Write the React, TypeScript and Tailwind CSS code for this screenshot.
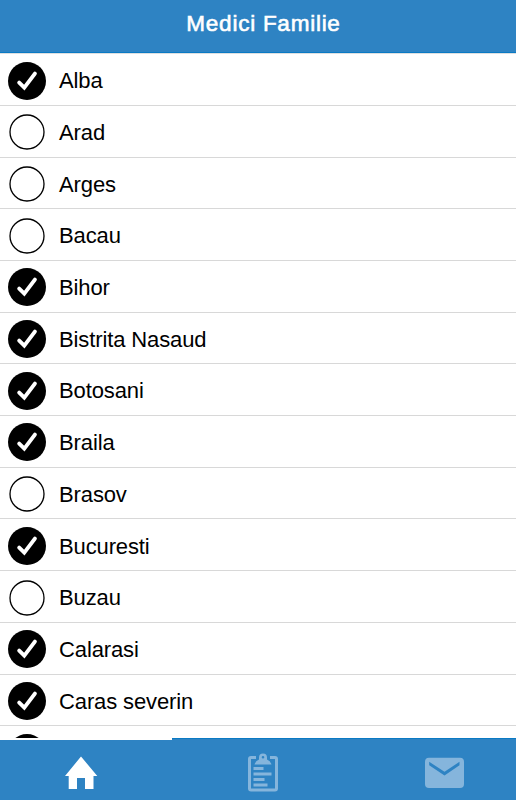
import React from 'react';

interface County {
  name: string;
  selected: boolean;
}

const COUNTIES: County[] = [
  { name: 'Alba', selected: true },
  { name: 'Arad', selected: false },
  { name: 'Arges', selected: false },
  { name: 'Bacau', selected: false },
  { name: 'Bihor', selected: true },
  { name: 'Bistrita Nasaud', selected: true },
  { name: 'Botosani', selected: true },
  { name: 'Braila', selected: true },
  { name: 'Brasov', selected: false },
  { name: 'Bucuresti', selected: true },
  { name: 'Buzau', selected: false },
  { name: 'Calarasi', selected: true },
  { name: 'Caras severin', selected: true },
  { name: '', selected: true },
];

const CheckMark: React.FC<{ selected: boolean }> = ({ selected }) => (
  <svg viewBox="0 0 38 38" className="w-[38px] h-[38px] shrink-0">
    {selected ? (
      <>
        <circle cx="19" cy="19" r="19" fill="#000" />
        <path
          d="M11.2 20.6 L16.3 25.6 L26.9 11.6"
          fill="none"
          stroke="#fff"
          strokeWidth="3.9"
          strokeLinecap="round"
        />
      </>
    ) : (
      <circle cx="19" cy="19" r="17" fill="#fff" stroke="#000" strokeWidth="1.3" />
    )}
  </svg>
);

const HomeIcon = () => (
  <svg viewBox="0 0 34 34" className="w-[34px] h-[34px]">
    <path d="M17 0.5 L33.3 20 H29.5 V33 H21 V22 H13 V33 H4.7 V20 H1 Z" fill="#fff" />
  </svg>
);

const ClipboardIcon = () => (
  <svg viewBox="0 0 32 40" className="w-8 h-10">
    <g fill="none" stroke="#85b5dc" strokeWidth="3">
      <path d="M9 4.5 H4 Q2.5 4.5 2.5 6 V35.5 Q2.5 37 4 37 H28 Q29.5 37 29.5 35.5 V6 Q29.5 4.5 28 4.5 H23" />
      <path d="M6.5 15.5 H16.5 M6.5 21 H24.5 M6.5 26.5 H17.5 M6.5 32 H20.5" strokeWidth="2.8" />
    </g>
    <path
      d="M7.5 11.5 Q8.5 8 12 6.5 V4.5 A4 4 0 0 1 20 4.5 V6.5 Q23.5 8 24.5 11.5 Z M16 2.9 A1.3 1.3 0 1 0 16 5.5 A1.3 1.3 0 1 0 16 2.9 Z"
      fill="#85b5dc"
      fillRule="evenodd"
    />
  </svg>
);

const MailIcon = () => (
  <svg viewBox="0 0 39 31" className="w-[39px] h-[31px]">
    <rect x="0" y="0.7" width="39" height="30.3" rx="4" fill="#85b5dc" />
    <path d="M4.2 4.8 L19.5 14.8 L34.5 4.8 V8.2 L19.5 18.6 L4.2 8.2 Z" fill="#2e83c3" />
  </svg>
);

const App: React.FC = () => {
  return (
    <div className="w-[516px] h-[800px] flex flex-col overflow-hidden bg-white text-black font-['Liberation_Sans',Arial,sans-serif]">
      <header className="h-[53px] shrink-0 bg-[#2e83c3] border-b border-[#0a7ac4] text-center">
        <h1 className="pt-2 text-[22.5px] leading-8 font-normal tracking-[0.75px] pl-[11px] text-white [-webkit-text-stroke:0.6px_white]">
          Medici Familie
        </h1>
      </header>

      <ul className="h-[685px] shrink-0 overflow-hidden border-t border-[#dedfe0] pt-[0.3px]">
        {COUNTIES.map((county, index) => (
          <li key={index} className="h-[51.7px] flex items-center gap-[13px] pt-0.5 pl-2 border-b-[1.5px] border-[#d8d8d8]">
            <CheckMark selected={county.selected} />
            <span className="pt-[1.4px] text-[22px] leading-7 tracking-[-0.12px]">{county.name}</span>
          </li>
        ))}
      </ul>

      <nav className="h-[62px] shrink-0 grid grid-cols-3 bg-[#2e83c3]">
        <button className="flex justify-center pt-4 pr-[10px] border-t-2 border-white">
          <HomeIcon />
        </button>
        <button className="flex justify-center pt-[14px] pl-[9px] border-t border-[#0a7ac4]">
          <ClipboardIcon />
        </button>
        <button className="flex justify-center pt-[18px] pl-[29px] border-t border-[#0a7ac4]">
          <MailIcon />
        </button>
      </nav>
    </div>
  );
};

export default App;
